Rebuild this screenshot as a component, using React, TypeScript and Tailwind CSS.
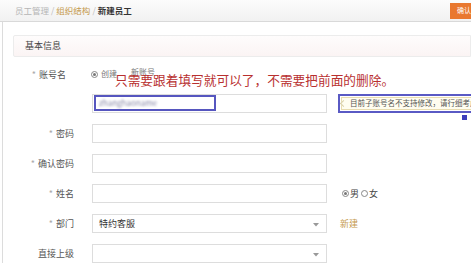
import React from "react";

const FONT = { fontFamily: '"Microsoft YaHei", "Noto Sans CJK SC", "Noto Sans", sans-serif' };

function Label({ text, req = true, extra = "" }: { text: string; req?: boolean; extra?: string }) {
  return (
    <div className={`w-[71px] shrink-0 text-right text-[9px] text-[#555] leading-none ${extra}`}>
      {req && <span className="text-[#aaa] mr-[3px]">*</span>}
      {text}
    </div>
  );
}

function Caret() {
  return (
    <svg width="6" height="4" viewBox="0 0 6 4" className="absolute right-[7px] top-[8px]">
      <path d="M0 0 L6 0 L3 3.5 Z" fill="#999" />
    </svg>
  );
}

function Radio({ on }: { on: boolean }) {
  return (
    <span className="inline-flex shrink-0 items-center justify-center w-[7px] h-[7px] rounded-full border border-[#888] bg-white">
      {on && <span className="w-[3px] h-[3px] rounded-full bg-[#777]" />}
    </span>
  );
}

export default function App() {
  return (
    <div className="relative w-[471px] h-[271px] overflow-hidden bg-white" style={FONT}>
      {/* header */}
      <div className="h-[22px] flex items-center justify-between border-b border-[#d9d9d9] bg-gradient-to-b from-[#fcfcfc] to-[#f1f1f1]">
        <div className="pl-[15px] text-[8.5px] leading-none flex items-center gap-[2px]">
          <span className="text-[#b5b5b5]">员工管理</span>
          <span className="text-[#bbb]">/</span>
          <span className="text-[#c59a4e]">组织结构</span>
          <span className="text-[#bbb]">/</span>
          <span className="text-[#333] font-bold">新建员工</span>
        </div>
        <div className="h-[16px] w-[21px] shrink-0 bg-[#e9782f] text-white text-[7px] flex items-center pl-[7px] leading-none overflow-hidden whitespace-nowrap">
          确认
        </div>
      </div>

      {/* body */}
      <div className="ml-[2px] border-l border-[#dcdcdc] h-[241px] pt-[13px]">
        <div className="ml-[10px] h-[22px] border border-[#ececec] rounded-l-[2px] bg-gradient-to-b from-[#fefcfc] to-[#fbf4f4] flex items-center pl-[11px] text-[9px] text-[#444]">
          基本信息
        </div>

        <div className="mt-[3px] flex flex-col">
          {/* 账号名 */}
          <div className="h-[28px] flex items-center">
            <Label text="账号名" extra="pr-[8px]" />
            <div className="ml-[17px] flex items-center text-[8px] text-[#777] leading-none">
              <Radio on />
              <span className="ml-[3px]">创建</span>
              <span className="ml-[14px] -mt-[4px]">新账号</span>
            </div>
          </div>

          {/* account input */}
          <div className="h-[30px] flex items-center">
            <div className="w-[71px] shrink-0" />
            <div className="ml-[18px] shrink-0 w-[235px] h-[19px] border border-[#ddd] bg-white flex items-center">
              <div className="ml-[1px] w-[122px] h-[16px] border-2 border-[#5656bf] flex items-center pl-[3px] overflow-hidden">
                <span className="text-[8px] text-[#8a8aa8] blur-[1.2px] leading-none">zhanghaoname</span>
              </div>
            </div>
            <div className="relative shrink-0 ml-[11px] w-[140px] h-[19px] border-2 border-[#5a5ac4] bg-white p-[1px]">
              <div className="h-full border border-[#e8dcb0] bg-[#fffdf0] flex items-center pl-[8px] text-[7.5px] text-[#555] whitespace-nowrap leading-none">
                目前子账号名不支持修改，请行细考虑
              </div>
              <span className="absolute left-[1px] top-[5px] w-[5px] h-[5px] border-l border-b border-[#d8cfa8] rotate-45 bg-[#fffdf0]" />
            </div>
          </div>

          {/* 密码 */}
          <div className="h-[30px] flex items-center">
            <Label text="密码" />
            <div className="ml-[18px] shrink-0 w-[235px] h-[19px] border border-[#ddd] bg-white" />
          </div>

          {/* 确认密码 */}
          <div className="h-[30px] flex items-center">
            <Label text="确认密码" />
            <div className="ml-[18px] shrink-0 w-[235px] h-[19px] border border-[#ddd] bg-white" />
          </div>

          {/* 姓名 */}
          <div className="h-[30px] flex items-center">
            <Label text="姓名" />
            <div className="ml-[18px] shrink-0 w-[235px] h-[19px] border border-[#ddd] bg-white" />
            <div className="ml-[15px] flex items-center text-[9px] text-[#444] leading-none">
              <Radio on />
              <span className="ml-[1px]">男</span>
              <span className="ml-[2px] inline-flex"><Radio on={false} /></span>
              <span className="ml-[1px]">女</span>
            </div>
          </div>

          {/* 部门 */}
          <div className="h-[30px] flex items-center">
            <Label text="部门" />
            <div className="relative shrink-0 ml-[18px] w-[235px] h-[19px] border border-[#ddd] bg-white flex items-center pl-[6px] text-[9px] text-[#333] leading-none">
              特约客服
              <Caret />
            </div>
            <div className="ml-[13px] text-[9px] text-[#c59a4e] leading-none">新建</div>
          </div>

          {/* 直接上级 */}
          <div className="h-[30px] flex items-center">
            <Label text="直接上级" req={false} />
            <div className="relative shrink-0 ml-[18px] w-[235px] h-[19px] border border-[#ddd] bg-white">
              <Caret />
            </div>
          </div>
        </div>
      </div>

      {/* overlays */}
      <div className="absolute left-[115px] top-[71px] text-[12.7px] leading-[17px] text-[#b8302f] whitespace-nowrap">
        只需要跟着填写就可以了，不需要把前面的删除。
      </div>
      <div className="absolute left-[462px] top-[115px] w-[5px] h-[5px] bg-[#3d3dbb]" />
    </div>
  );
}
